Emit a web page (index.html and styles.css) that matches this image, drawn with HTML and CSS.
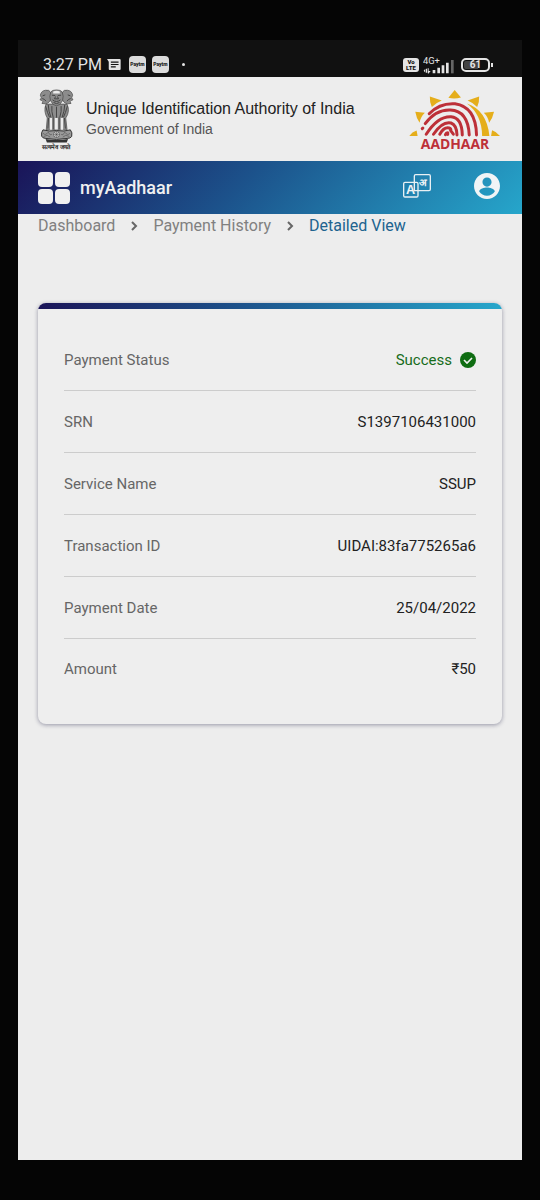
FILE: index.html
```
<!DOCTYPE html>
<html lang="en">
<head>
    <meta charset="UTF-8">
    <meta name="viewport" content="width=device-width, initial-scale=1.0">
    <title>myAadhaar | Payment History | Detailed View</title>
    <link rel="stylesheet" href="styles.css">
</head>
<body>
    <div class="screen">
        <div class="status-bar">
            <span class="clock">3:27 PM</span>
            <svg class="message-icon" viewBox="0 0 40 36" aria-hidden="true">
                <path fill="#e4e4e4" d="M0 2h36q3 0 3 3v26q0 3-3 3H8q-3 0-3-3V10z"/>
                <path stroke="#111" stroke-width="3.5" d="M11 11h22M11 18h22M11 25h14"/>
            </svg>
            <span class="app-badge">Paytm</span>
            <span class="app-badge">Paytm</span>
            <span class="more-dot"></span>
            <div class="status-right">
                <span class="volte">Vo<br>LTE</span>
                <svg class="signal" viewBox="0 -8 96 66" role="img" aria-label="Signal">
                    <text class="signal-text" x="0" y="22">4G+</text>
                    <path fill="#e4e4e4" d="M2 42l5-6v12zM9 36h3v12H9zM14 35h3v8h6l-7 8-2-2zM29 40h8v10h-8zM43 33h8v17h-8zM56 26h8v24h-8zM69 18h8v32h-8z"/>
                    <path fill="#666" d="M84 10h8v40h-8z"/>
                </svg>
                <span class="battery"><span class="battery-level">61</span></span>
            </div>
        </div>

        <header class="site-header">
            <div class="emblem">
                <svg class="emblem-lions" viewBox="55 25 106 162" role="img" aria-label="Emblem of India">
                    <g fill="#8c8c8c" stroke="#444" stroke-width="2">
                        <path d="M76 70Q68 92 80 112L77 148H140L136 112Q150 92 140 70z"/>
                        <path d="M59 43Q62 29 75 28Q86 26 90 34L92 50Q88 68 74 69L64 68Q69 62 64 59L58 57L62 51z"/>
                        <path d="M157 43Q154 29 141 28Q130 26 126 34L124 50Q128 68 142 69L152 68Q147 62 152 59L158 57L154 51z"/>
                        <path d="M91 33Q95 27 108 27Q121 27 125 33Q131 46 126 60Q118 75 108 75Q98 75 90 60Q85 46 91 33z"/>
                    </g>
                    <path fill="#ececec" d="M88 112h7v36h-7zM103 112h9v35h-9zM121 112h7v36h-7zM98 32q10-5 20 0v6H98z"/>
                    <g fill="none" stroke="#444" stroke-width="3">
                        <path d="M94 43l10 1M112 44l10-1M105 47l-3 7h12l-3-7M96 57q12 10 24 0M99 65q9 7 18 0"/>
                        <path d="M66 45l8-3M65 53q8 2 11 8M142 42l8 3M151 53q-8 2-11 8"/>
                        <path d="M75 76q6 22 12 34M83 72q1 20 8 38M94 76q-2 16 4 34M108 78v33M122 76q2 16-4 34M133 72q-1 20-8 38M141 76q-6 22-12 34"/>
                        <path d="M84 112l-2 32M98 110v36M116 110v36M132 112l3 32"/>
                    </g>
                    <path fill="#999" stroke="#333" stroke-width="3" d="M67 148Q85 154 108 150Q132 154 150 148Q157 156 154 168Q150 174 140 174Q108 180 76 174Q66 174 63 167Q61 156 67 148z"/>
                    <path fill="none" stroke="#555" stroke-width="2" d="M67 158q7 9 16-3q5 12 11 7M149 158q-7 9-16-3q-5 12-11 7M69 168q12-8 20 2M147 168q-12-8-20 2"/>
                    <circle cx="108" cy="162" r="9" fill="#ddd" stroke="#444" stroke-width="2"/>
                    <path stroke="#444" stroke-width="1.5" d="M99 162h18M108 153v18M102 156l12 12M114 156l-12 12"/>
                    <path fill="#333" d="M75 176Q108 182 143 176L139 186H79z"/>
                </svg>
                <span class="motto" lang="hi">सत्यमेव जयते</span>
            </div>
            <div class="authority">
                <h1 class="authority-name">Unique Identification Authority of India</h1>
                <p class="government">Government of India</p>
            </div>
            <svg class="aadhaar-logo" viewBox="58 24 278 198" role="img" aria-label="Aadhaar">
                <g fill="#e5ae1b">
                    <path d="M196 26L215 49Q196 55 177 50z"/>
                    <path d="M121 46L157 58Q139 65 127 78Q120 63 121 46z"/>
                    <path d="M270 46L235 58Q253 65 264 78Q271 63 270 46z"/>
                    <path d="M77 92L106 95Q93 107 90 125Q80 111 77 92z"/>
                    <path d="M315 92L284 95Q297 107 300 125Q311 111 315 92z"/>
                    <path d="M59 165Q67 153 81 149L84 165z"/>
                    <path d="M333 165Q322 152 309 148L306 165z"/>
                    <path d="M233 67Q293 87 301 165H279Q278 100 233 67z"/>
                </g>
                <g fill="none" stroke="#bd3038" stroke-width="9" stroke-linecap="round">
                    <path d="M119 98Q151 65 197 68Q260 77 262 162"/>
                    <path d="M107 128Q139 85 183 87Q236 89 240 162"/>
                    <path d="M98 143l2-2M110 160Q145 105 185 107Q218 110 219 162"/>
                    <path d="M132 160Q159 120 185 126Q202 132 203 162"/>
                    <path d="M151 160Q163 138 179 141Q186 144 184 149L192 160"/>
                    <path d="M168 161q3-6 7-5v5"/>
                </g>
                <text class="logo-text" x="197" y="206">AADHAAR</text>
            </svg>
        </header>

        <nav class="app-bar">
            <button class="icon-button" type="button" aria-label="Menu">
                <svg class="grid-icon" viewBox="0 0 32 32" fill="#f0f0f0">
                    <rect width="15" height="15" rx="4"/>
                    <rect x="17" width="15" height="15" rx="4"/>
                    <rect y="17" width="15" height="15" rx="4"/>
                    <rect x="17" y="17" width="15" height="15" rx="4"/>
                </svg>
            </button>
            <a class="app-name" href="#">myAadhaar</a>
            <div class="app-actions">
                <button class="icon-button" type="button" aria-label="Change language">
                    <svg class="language-icon" viewBox="0 0 84 72">
                        <g fill="none" stroke="#e8f0f4" stroke-width="4">
                            <rect x="2" y="25" width="43" height="44" rx="4"/>
                            <path d="M34 25V6q0-4 4-4h40q4 0 4 4v40q0 4-4 4H45M34 25v25h11"/>
                        </g>
                        <text class="language-latin" x="23" y="60">A</text>
                        <text class="language-hindi" x="60" y="35" lang="hi">अ</text>
                    </svg>
                </button>
                <button class="icon-button" type="button" aria-label="Account">
                    <svg class="account-icon" viewBox="2 2 20 20">
                        <path fill="#f0f4f6" d="M12 2C6.48 2 2 6.48 2 12s4.48 10 10 10 10-4.48 10-10S17.52 2 12 2zm0 3.5c1.93 0 3.5 1.57 3.5 3.5s-1.57 3.5-3.5 3.5S8.5 10.93 8.5 9 10.07 5.5 12 5.5zM12 19.5c-2.5 0-4.71-1.28-6-3.22.03-1.99 4-3.08 6-3.08s5.97 1.09 6 3.08C16.71 18.22 14.5 19.5 12 19.5z"/>
                    </svg>
                </button>
            </div>
        </nav>

        <main class="content">
            <div class="breadcrumbs">
                <a href="#">Dashboard</a>
                <svg class="chevron" viewBox="0 0 8 10"><path d="M2 1l4 4-4 4"/></svg>
                <a href="#">Payment History</a>
                <svg class="chevron" viewBox="0 0 8 10"><path d="M2 1l4 4-4 4"/></svg>
                <a class="current" href="#">Detailed View</a>
            </div>

            <section class="payment-card">
                <dl class="details">
                    <div class="detail-row">
                        <dt>Payment Status</dt>
                        <dd class="success">Success
                            <svg class="check-icon" viewBox="0 0 16 16" aria-hidden="true">
                                <circle cx="8" cy="8" r="8" fill="#0f6d12"/>
                                <path fill="none" stroke="#f0f0f0" stroke-width="1.6" d="M4 8l3 3 5-5"/>
                            </svg>
                        </dd>
                    </div>
                    <div class="detail-row">
                        <dt>SRN</dt>
                        <dd>S1397106431000</dd>
                    </div>
                    <div class="detail-row">
                        <dt>Service Name</dt>
                        <dd>SSUP</dd>
                    </div>
                    <div class="detail-row">
                        <dt>Transaction ID</dt>
                        <dd>UIDAI:83fa775265a6</dd>
                    </div>
                    <div class="detail-row">
                        <dt>Payment Date</dt>
                        <dd>25/04/2022</dd>
                    </div>
                    <div class="detail-row">
                        <dt>Amount</dt>
                        <dd>₹50</dd>
                    </div>
                </dl>
            </section>
        </main>
    </div>
</body>
</html>
```
FILE: styles.css
```
* {
    box-sizing: border-box;
}

body {
    margin: 0;
    min-height: 100vh;
    padding: 40px 18px;
    display: flex;
    background-color: #050505;
    font-family: Roboto, sans-serif;
    font-size: 16px;
}

.screen {
    flex: 1;
    display: flex;
    flex-direction: column;
    background-color: #ededed;
}

/* phone status bar */
.status-bar {
    display: flex;
    align-items: center;
    height: 37px;
    padding: 12px 32px 0 25px;
    background-color: #111;
    color: #e4e4e4;
}

.clock {
    margin-right: 5px;
}

.message-icon {
    width: 14px;
    height: 13px;
    margin-right: 8px;
}

.app-badge {
    width: 17px;
    height: 17px;
    margin-right: 6px;
    border-radius: 4px;
    background-color: #dcdcdc;
    color: #222;
    font-size: 5px;
    font-weight: 900;
    line-height: 17px;
    text-align: center;
}

.more-dot {
    width: 3px;
    height: 3px;
    margin-left: 7px;
    border-radius: 50%;
    background-color: #e4e4e4;
}

.status-right {
    display: flex;
    align-items: center;
    margin-left: auto;
}

.volte {
    width: 16px;
    height: 14px;
    margin-right: 4px;
    padding: 1px;
    border-radius: 3px;
    background-color: #e4e4e4;
    color: #111;
    font-size: 6px;
    font-weight: 900;
    line-height: 6px;
    text-align: center;
}

.signal {
    width: 32px;
    height: 22px;
    margin-right: 6px;
}

.signal-text {
    fill: #e4e4e4;
    font-size: 28px;
}

.battery {
    position: relative;
    width: 29px;
    height: 14px;
    padding: 1px;
    border: 2px solid #e4e4e4;
    border-radius: 5px;
}

.battery::after {
    content: "";
    position: absolute;
    top: 3px;
    right: -5px;
    width: 2px;
    height: 4px;
    background-color: #e4e4e4;
}

.battery-level {
    display: block;
    height: 8px;
    border-radius: 2px;
    background: linear-gradient(to right, #444 61%, transparent 61%);
    font-size: 10px;
    font-weight: 700;
    line-height: 8px;
    text-align: center;
}

/* authority header */
.site-header {
    display: flex;
    align-items: flex-start;
    height: 84px;
    padding: 12px 21px 0 20px;
}

.emblem {
    display: flex;
    flex-direction: column;
    align-items: center;
    width: 36px;
    margin-right: 12px;
}

.emblem-lions {
    width: 35px;
    height: 54px;
}

.motto {
    color: #222;
    font-size: 6px;
    font-weight: 700;
    line-height: 8px;
    white-space: nowrap;
}

.authority {
    padding-top: 10px;
    font-family: "Liberation Sans", Arial, sans-serif;
}

.authority-name {
    margin: 0;
    color: #222;
    font-size: 16px;
    font-weight: 400;
    line-height: 20px;
}

.government {
    margin: 0;
    color: #555;
    font-size: 14px;
    line-height: 20px;
}

.aadhaar-logo {
    width: 92px;
    height: 66px;
    margin-left: auto;
}

.logo-text {
    fill: #bd3038;
    font-family: "Open Sans", sans-serif;
    font-size: 42px;
    font-weight: 700;
    text-anchor: middle;
}

/* navigation */
.app-bar {
    display: flex;
    align-items: center;
    height: 53px;
    padding: 0 22px 0 20px;
    background: linear-gradient(135deg, #1a1458 0%, #1c538c 45%, #26a6cb 100%);
}

.icon-button {
    display: flex;
    padding: 0;
    border: 0;
    background: none;
    cursor: pointer;
}

.grid-icon {
    width: 32px;
    height: 32px;
}

.app-name {
    margin-left: 10px;
    color: #f0f0f0;
    font-size: 18px;
    font-weight: 500;
    text-decoration: none;
}

.app-actions {
    display: flex;
    align-items: center;
    gap: 43px;
    margin-left: auto;
    padding-bottom: 4px;
}

.language-icon {
    width: 28px;
    height: 24px;
}

.language-latin,
.language-hindi {
    fill: #f0f4f6;
    font-size: 38px;
    font-weight: 700;
    text-anchor: middle;
}

.language-hindi {
    font-size: 30px;
}

.account-icon {
    width: 26px;
    height: 26px;
}

/* page content */
.content {
    padding: 0 20px;
}

.breadcrumbs {
    display: flex;
    align-items: center;
    height: 23px;
    margin-bottom: 66px;
}

.breadcrumbs a {
    color: #808080;
    text-decoration: none;
}

.breadcrumbs .current {
    color: #20638f;
}

.chevron {
    width: 8px;
    height: 10px;
    margin: 0 15px;
    fill: none;
    stroke: #666;
    stroke-width: 2;
}

.payment-card {
    overflow: hidden;
    border-radius: 8px;
    background-color: #eee;
    box-shadow: 0 1px 4px rgba(20, 20, 60, 0.4);
}

.payment-card::before {
    content: "";
    display: block;
    height: 6px;
    background: linear-gradient(to right, #1a1458, #1c538c 45%, #26a6cb);
}

.details {
    margin: 0;
    padding: 20px 26px 25px;
    font-size: 15px;
}

.detail-row {
    display: flex;
    align-items: center;
    justify-content: space-between;
    height: 62px;
    border-bottom: 1px solid #ccc;
}

.detail-row:last-child {
    height: 60px;
    border-bottom: 0;
}

.detail-row dt {
    color: #666;
}

.detail-row dd {
    display: flex;
    align-items: center;
    gap: 8px;
    margin: 0;
    color: #222;
}

.detail-row .success {
    color: #176c1a;
}

.check-icon {
    width: 16px;
    height: 16px;
}
```
